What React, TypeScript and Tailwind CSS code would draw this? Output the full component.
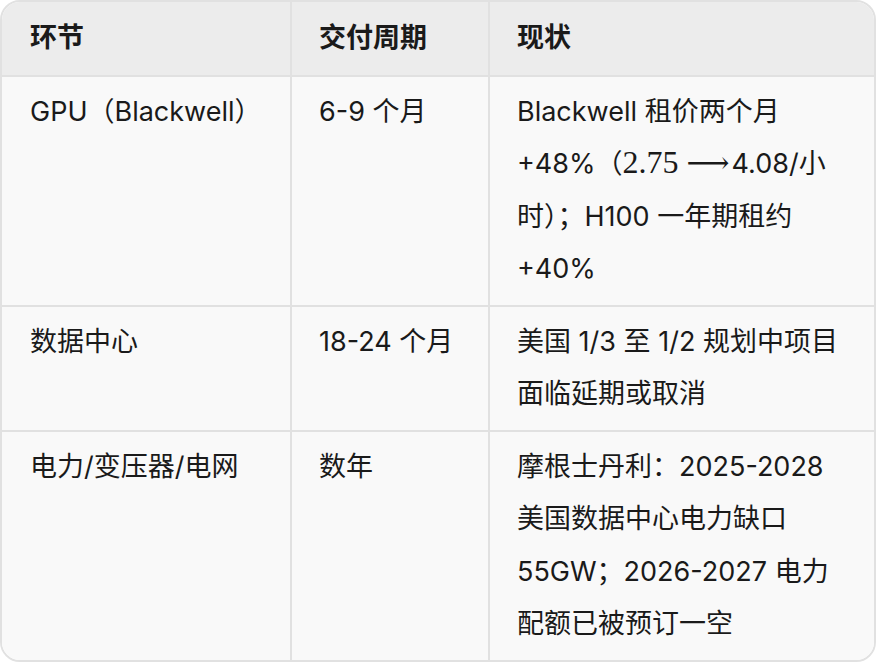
const rows: { stage: string; lead: string; status: React.ReactNode[] }[] = [
  {
    stage: 'GPU（Blackwell）',
    lead: '6-9 个月',
    status: [
      'Blackwell 租价两个月',
      <>
        +48%（
        <span className="font-['Liberation_Serif',serif] text-[32px] leading-none">2.75</span>
        <span className="font-['DejaVu_Serif',serif] text-[30px] leading-none ml-[8px] mr-[2px]">⟶</span>
        4.08/小
      </>,
      '时）；H100 一年期租约',
      '+40%',
    ],
  },
  {
    stage: '数据中心',
    lead: '18-24 个月',
    status: ['美国 1/3 至 1/2 规划中项目', '面临延期或取消'],
  },
  {
    stage: '电力/变压器/电网',
    lead: '数年',
    status: ['摩根士丹利：2025-2028', '美国数据中心电力缺口', '55GW；2026-2027 电力', '配额已被预订一空'],
  },
];

export default function App() {
  return (
    <div className="w-[876px] h-[662px] bg-white font-['Inter','Noto_Sans_CJK_SC',sans-serif] text-[27px] leading-[52.5px] text-[#1a1a1a]">
      <div className="border-2 border-[#e1e1e1] rounded-[20px] overflow-hidden">
        <div className="grid grid-cols-[288px_2px_196px_2px_1fr] bg-[#ececec] font-semibold">
          <div className="px-[28px] py-[10px]">环节</div>
          <div className="bg-[#e1e1e1]" />
          <div className="px-[27px] py-[10px]">交付周期</div>
          <div className="bg-[#e1e1e1]" />
          <div className="px-[27px] py-[10px]">现状</div>
        </div>
        {rows.map((r) => (
          <div key={r.stage} className="grid grid-cols-[288px_2px_196px_2px_1fr] bg-[#f9f9f9] border-t-2 border-[#e1e1e1]">
            <div className="px-[28px] py-[9px] whitespace-nowrap">{r.stage}</div>
            <div className="bg-[#e1e1e1]" />
            <div className="px-[27px] py-[9px] whitespace-nowrap">{r.lead}</div>
            <div className="bg-[#e1e1e1]" />
            <div className="px-[27px] py-[9px]">
              {r.status.map((line, i) => (
                <div key={i} className="whitespace-nowrap">
                  {line}
                </div>
              ))}
            </div>
          </div>
        ))}
      </div>
    </div>
  );
}
